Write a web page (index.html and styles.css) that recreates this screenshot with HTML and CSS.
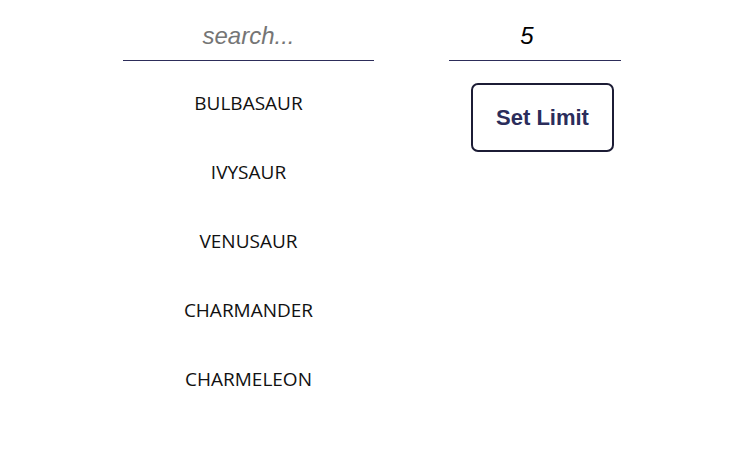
FILE: index.html
```html
<!DOCTYPE html>
<html>
<head>
<meta charset="utf-8">
<link rel="stylesheet" href="styles.css">
</head>
<body>
<div class="app">
  <div class="col-left">
    <input class="search" type="text" placeholder="search...">
    <ul class="list">
      <li>BULBASAUR</li>
      <li>IVYSAUR</li>
      <li>VENUSAUR</li>
      <li>CHARMANDER</li>
      <li>CHARMELEON</li>
    </ul>
  </div>
  <div class="col-right">
    <input class="limit" type="text" value="5">
    <button class="btn">Set Limit</button>
  </div>
</div>
</body>
</html>
```
FILE: styles.css
```css
html, body {
  margin: 0;
  padding: 0;
  background: #ffffff;
}
.app {
  display: flex;
  padding-left: 123px;
  padding-top: 20px;
  gap: 75px;
}
.col-left {
  display: flex;
  flex-direction: column;
  width: 251px;
}
.col-right {
  display: flex;
  flex-direction: column;
  width: 172px;
}
.search, .limit {
  box-sizing: border-box;
  height: 41px;
  border: none;
  border-bottom: 1px solid #2d2d5a;
  outline: none;
  text-align: center;
  font-family: "Liberation Sans", Arial, sans-serif;
  font-style: italic;
  font-size: 24px;
  padding: 0 0 8px;
  background: transparent;
  color: #000;
}
.search {
  width: 251px;
}
.limit {
  width: 172px;
  padding-right: 16px;
}
.search::placeholder {
  color: #757575;
}
.list {
  list-style: none;
  margin: 7px 0 0;
  padding: 0;
  font-family: "Open Sans", "Noto Sans", sans-serif;
  font-size: 19px;
  color: #111;
}
.list li {
  height: 69px;
  display: flex;
  align-items: center;
  justify-content: center;
}
.btn {
  margin-top: 22px;
  margin-left: 22px;
  align-self: flex-start;
  width: 143px;
  height: 69px;
  box-sizing: border-box;
  border: 2px solid #1c1c35;
  border-radius: 7px;
  background: #fff;
  color: #2b2d5b;
  font-family: "Liberation Sans", Arial, sans-serif;
  font-weight: bold;
  font-size: 22px;
  cursor: pointer;
}
```
